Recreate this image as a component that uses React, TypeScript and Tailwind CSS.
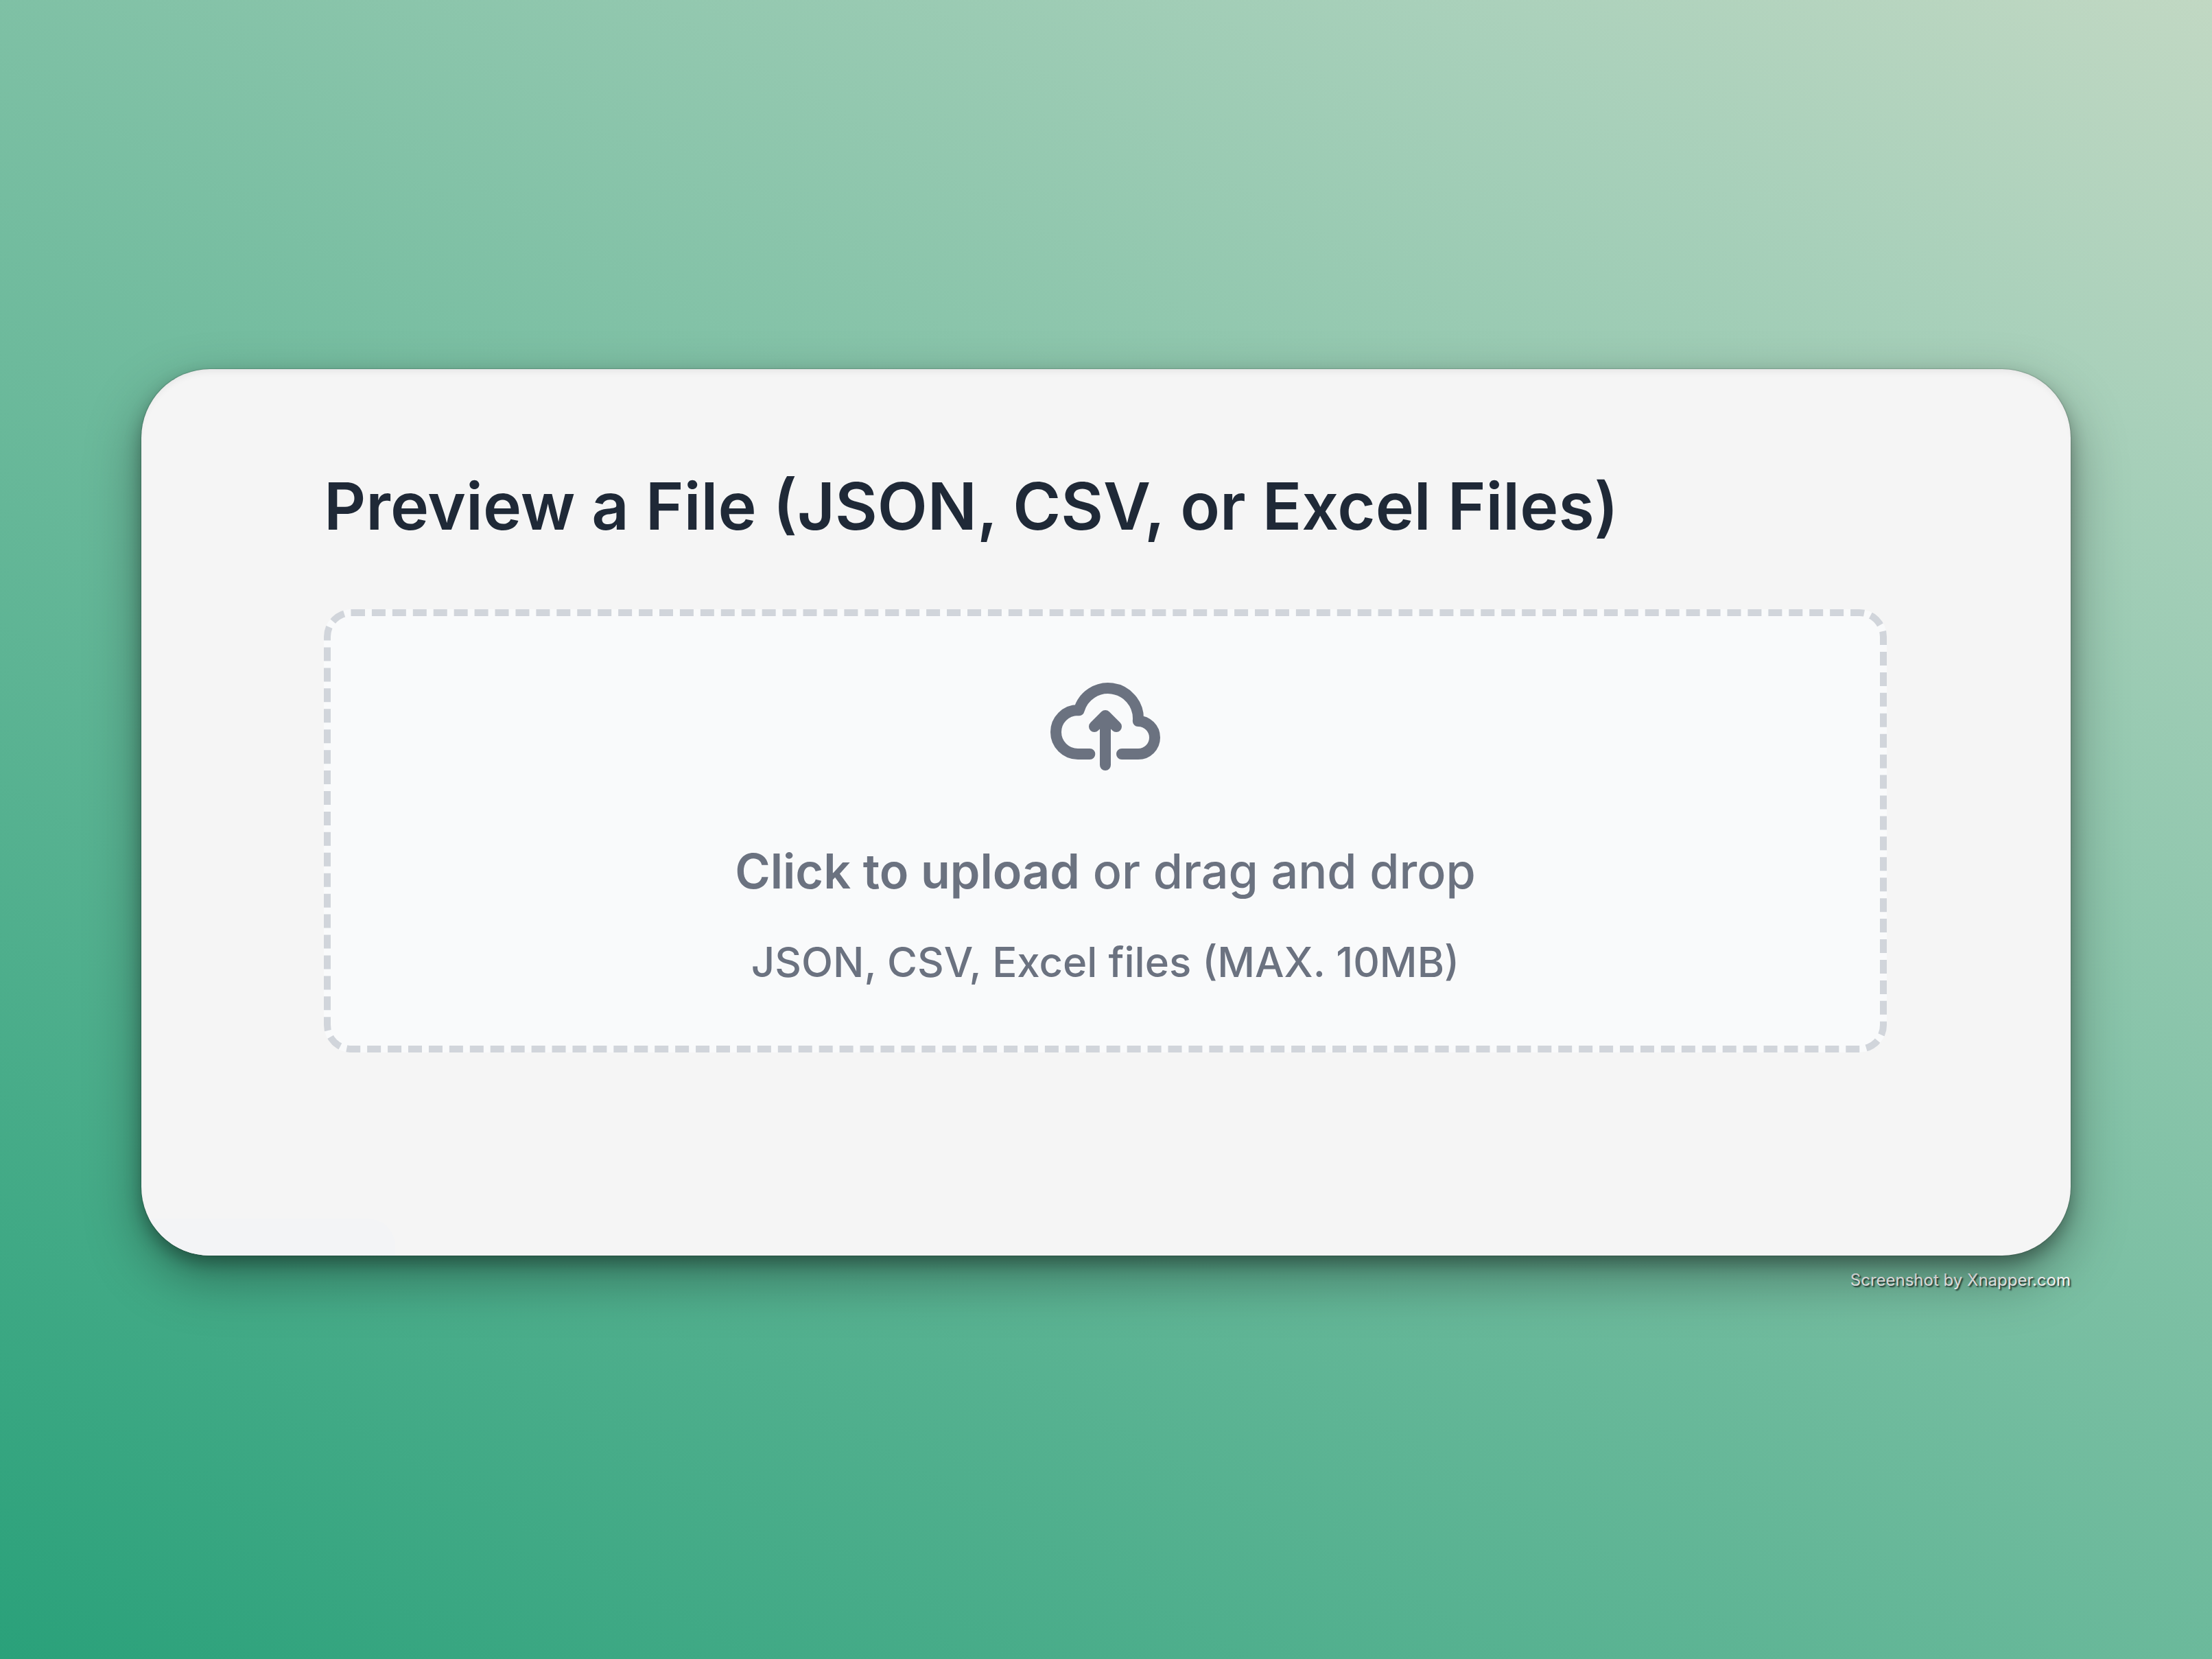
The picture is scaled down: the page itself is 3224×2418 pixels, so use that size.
import React, { useState } from "react";

function CloudUploadIcon() {
  return (
    <svg className="h-32 w-40" aria-hidden="true" fill="none" viewBox="0 0 20 16">
      <path
        stroke="currentColor"
        strokeLinecap="round"
        strokeLinejoin="round"
        strokeWidth="2"
        d="M13 13h3a3 3 0 0 0 0-6h-.025A5.56 5.56 0 0 0 16 6.5 5.5 5.5 0 0 0 5.207 5.021C5.137 5.017 5.071 5 5 5a4 4 0 0 0 0 8h2.167M10 15V6m0 0L8 8m2-2 2 2"
      />
    </svg>
  );
}

export default function App() {
  const [, setFile] = useState<File | null>(null);

  return (
    <div className="flex min-h-screen flex-col bg-[linear-gradient(30deg,#2aa17a,#a8d0ba_84%,#c1d8c3)] px-[206px] pt-[538px] font-['Inter','Liberation_Sans',sans-serif]">
      <main className="relative flex flex-col overflow-hidden rounded-[100px] bg-[#f5f5f5] pt-[140px] pr-[268px] pb-[296px] pl-[266px] shadow-[0_32px_80px_rgba(0,0,0,0.35),0_12px_24px_rgba(0,0,0,0.3),0_0_2px_rgba(0,0,0,0.4),inset_0_8px_12px_-6px_rgba(0,0,0,0.08)]">
        <h1 className="text-[95px] leading-[120px] font-semibold text-[#1f2937]">
          Preview a File (JSON, CSV, or Excel Files)
        </h1>
        <label
          htmlFor="file"
          className="mt-[90px] flex cursor-pointer flex-col items-center rounded-[40px] border-[10px] border-dashed border-[#d1d5db] bg-[#f9fafb] pt-[97px] pb-[82px] text-[#6b7280]"
        >
          <CloudUploadIcon />
          <span className="mt-[97px] text-[70px] leading-[100px] font-medium">
            <span className="font-semibold">Click to upload</span> or drag and drop
          </span>
          <span className="mt-[42px] text-[60px] leading-[80px] font-medium">JSON, CSV, Excel files (MAX. 10MB)</span>
          <input
            id="file"
            type="file"
            accept=".json,.csv,.xls,.xlsx"
            className="sr-only"
            onChange={(e) => setFile(e.target.files?.[0] ?? null)}
          />
        </label>
        <div className="absolute bottom-0 left-0 h-[54px] w-[370px] rounded-tr-[40px] bg-[#f3f4f6]" />
      </main>
      <footer className="mt-5 text-right text-[24px] leading-[32px] text-white [text-shadow:2px_2px_2px_rgba(0,0,0,0.7)]">
        Screenshot by Xnapper.com
      </footer>
    </div>
  );
}
